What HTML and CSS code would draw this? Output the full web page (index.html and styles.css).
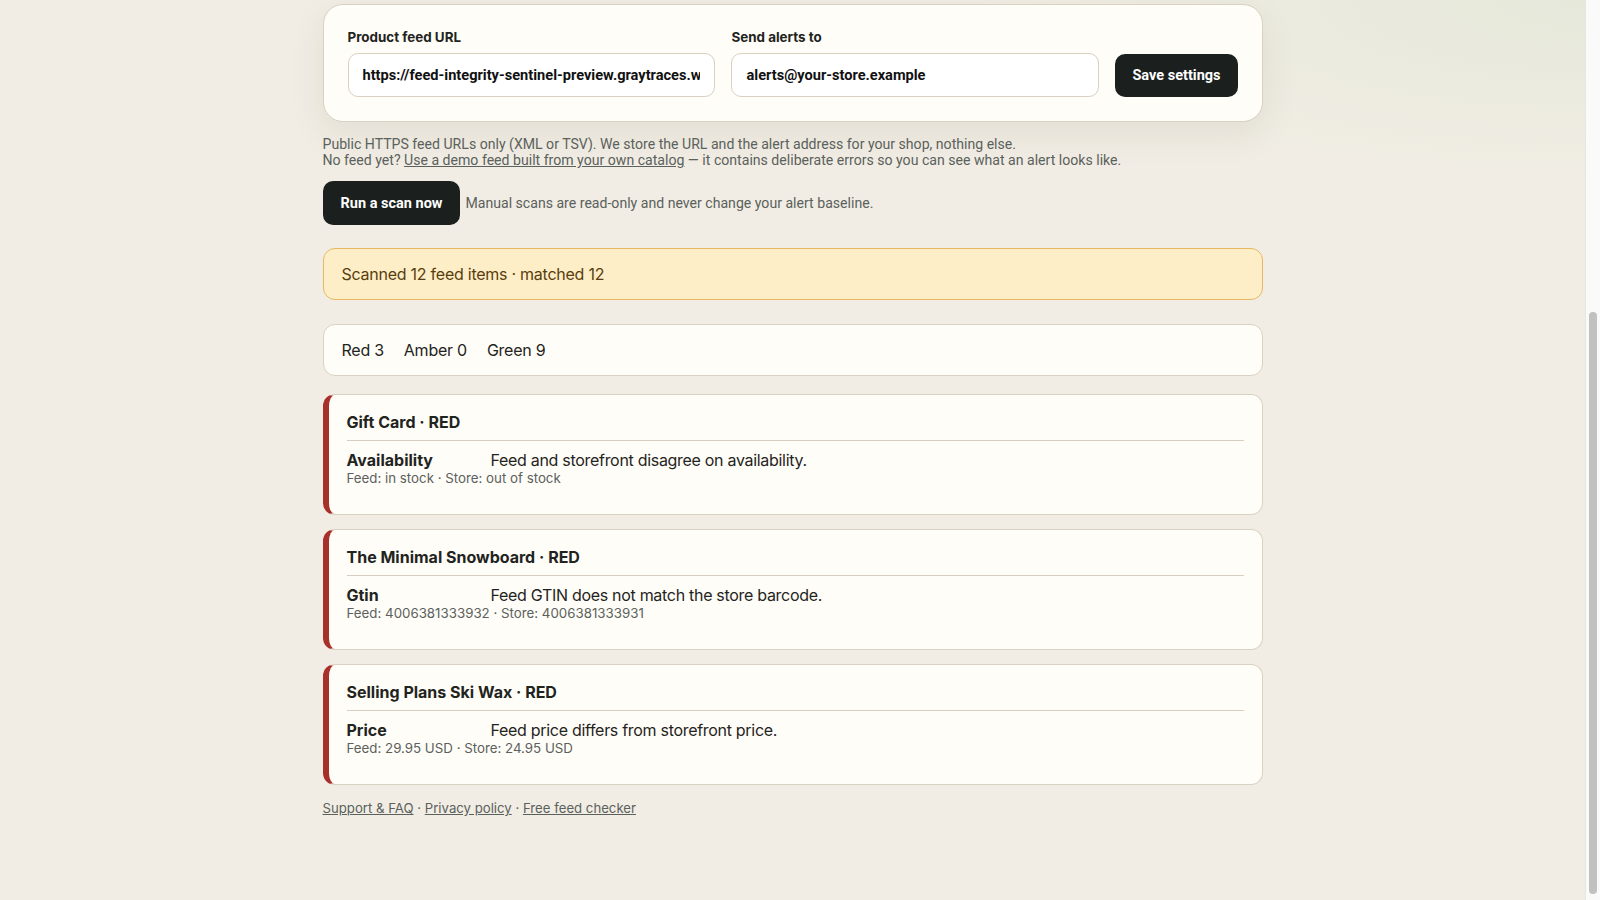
FILE: index.html
```html
<!DOCTYPE html>
<html lang="en">
<head>
<meta charset="utf-8">
<title>Feed Integrity Sentinel</title>
<link rel="stylesheet" href="styles.css">
</head>
<body>
<main class="page">
  <form class="settings-card">
    <label class="field">
      <span class="field-label">Product feed URL</span>
      <input class="field-input" type="text" value="https://feed-integrity-sentinel-preview.graytraces.workers.dev/feed.xml">
    </label>
    <label class="field">
      <span class="field-label">Send alerts to</span>
      <input class="field-input" type="text" value="alerts@your-store.example">
    </label>
    <button class="btn btn-save" type="button">Save settings</button>
  </form>

  <p class="help">Public HTTPS feed URLs only (XML or TSV). We store the URL and the alert address for your shop, nothing else.<br>No feed yet? <a href="#" class="help-link">Use a demo feed built from your own catalog</a> — it contains deliberate errors so you can see what an alert looks like.</p>

  <div class="scan-row">
    <button class="btn btn-scan" type="button">Run a scan now</button>
    <span class="scan-note">Manual scans are read-only and never change your alert baseline.</span>
  </div>

  <div class="banner">Scanned 12 feed items · matched 12</div>

  <div class="counts">
    <span>Red 3</span>
    <span>Amber 0</span>
    <span>Green 9</span>
  </div>

  <section class="issues">
    <article class="issue">
      <h2 class="issue-title">Gift Card · RED</h2>
      <div class="issue-row">
        <div class="issue-line"><strong class="issue-field">Availability</strong><span class="issue-desc">Feed and storefront disagree on availability.</span></div>
        <div class="issue-meta">Feed: in stock · Store: out of stock</div>
      </div>
    </article>
    <article class="issue">
      <h2 class="issue-title">The Minimal Snowboard · RED</h2>
      <div class="issue-row">
        <div class="issue-line"><strong class="issue-field">Gtin</strong><span class="issue-desc">Feed GTIN does not match the store barcode.</span></div>
        <div class="issue-meta">Feed: 4006381333932 · Store: 4006381333931</div>
      </div>
    </article>
    <article class="issue">
      <h2 class="issue-title">Selling Plans Ski Wax · RED</h2>
      <div class="issue-row">
        <div class="issue-line"><strong class="issue-field">Price</strong><span class="issue-desc">Feed price differs from storefront price.</span></div>
        <div class="issue-meta">Feed: 29.95 USD · Store: 24.95 USD</div>
      </div>
    </article>
  </section>

  <footer class="footer">
    <a href="#">Support &amp; FAQ</a> · <a href="#">Privacy policy</a> · <a href="#">Free feed checker</a>
  </footer>
</main>
</body>
</html>
```

FILE: styles.css
```css
html {
  overflow: hidden;
}
body {
  margin: 0 15px 0 0;
  min-height: 900px;
  background-color: #f1ede4;
  background-image: radial-gradient(ellipse 620px 180px at 100% 0%, rgba(228, 232, 217, 0.95), rgba(228, 232, 217, 0) 100%);
  background-repeat: no-repeat;
  color: #1f2421;
  font-family: Inter, "Noto Sans", sans-serif;
}
/* emulated browser scrollbar on the right edge */
body::before {
  content: "";
  position: fixed;
  top: 0;
  right: 0;
  width: 14px;
  height: 100%;
  background: #fafafa;
  border-left: 1px solid #e6e6e6;
}
body::after {
  content: "";
  position: fixed;
  top: 312px;
  right: 3px;
  width: 8px;
  height: 582px;
  border-radius: 4px;
  background: #c1c1c1;
}
.page {
  max-width: 940px;
  margin: 0 auto;
  padding: 4px 0 0;
}

.settings-card {
  display: grid;
  grid-template-columns: 1fr 1fr auto;
  column-gap: 16px;
  align-items: end;
  padding: 24px;
  background: #fffdf8;
  border: 1px solid #d9d1c1;
  border-radius: 20px;
  box-shadow: 0 12px 36px rgba(60, 50, 30, 0.08);
}
.field {
  display: flex;
  flex-direction: column;
  gap: 8px;
  min-width: 0;
}
.field-label {
  font-size: 13.4px;
  line-height: 16px;
  font-weight: 700;
  color: #1f2421;
}
.field-input {
  height: 44px;
  box-sizing: border-box;
  padding: 0 14px;
  border: 1px solid #d9d0bf;
  border-radius: 10px;
  background: #fff;
  font-family: Roboto, "Liberation Sans", sans-serif;
  font-size: 14.6px;
  font-weight: 700;
  color: #111;
  min-width: 0;
  width: 100%;
}
.btn {
  border: 0;
  border-radius: 10px;
  background: #1b201e;
  color: #fff;
  font-family: Roboto, "Liberation Sans", sans-serif;
  font-weight: 700;
  font-size: 14.5px;
  cursor: pointer;
}
.btn-save {
  height: 43px;
  padding: 0 17px;
}
.help {
  margin: 14px 0 0;
  font-family: Roboto, "Liberation Sans", sans-serif;
  font-size: 14.1px;
  line-height: 16px;
  color: #5b615c;
}
.help-link {
  color: #5b615c;
}
.scan-row {
  display: flex;
  align-items: center;
  gap: 5px;
  margin-top: 13px;
}
.btn-scan {
  height: 44px;
  padding: 0 18px;
}
.scan-note {
  font-family: Roboto, "Liberation Sans", sans-serif;
  font-size: 14.1px;
  color: #5b615c;
}
.banner {
  margin-top: 23px;
  padding: 16px 18px 15px;
  line-height: 19px;
  font-size: 16px;
  letter-spacing: -0.25px;
  background: #fdeec8;
  border: 1px solid #e6b960;
  border-radius: 12px;
  color: #5a3d0c;
}
.counts {
  display: flex;
  gap: 20px;
  margin-top: 24px;
  padding: 16px 18px 15px;
  line-height: 19px;
  font-size: 16px;
  letter-spacing: -0.25px;
  background: #fffdf8;
  border: 1px solid #d9d1c1;
  border-radius: 12px;
}
.issues {
  display: flex;
  flex-direction: column;
  gap: 14px;
  margin-top: 18px;
}
.issue {
  padding: 17px 18px 18px;
  background: #fffdf8;
  border: 1px solid #d9d1c1;
  border-left: 6px solid #a8302a;
  border-radius: 12px;
}
.issue-title {
  margin: 0;
  padding-bottom: 8px;
  border-bottom: 1px solid #d6cfc1;
  font-size: 16px;
  line-height: 20px;
  font-weight: 700;
}
.issue-row {
  margin: 10px 0;
}
.issue-line {
  display: flex;
  font-size: 16px;
  line-height: 19px;
}
.issue-field {
  width: 144px;
  flex: none;
  font-weight: 700;
}
.issue-desc {
  letter-spacing: -0.3px;
}
.issue-meta {
  font-size: 13.3px;
  line-height: 16px;
  color: #5b615c;
}
.footer {
  margin-top: 15px;
  font-size: 13.2px;
  line-height: 16px;
  color: #5b615c;
}
.footer a {
  color: #5b615c;
}
```
